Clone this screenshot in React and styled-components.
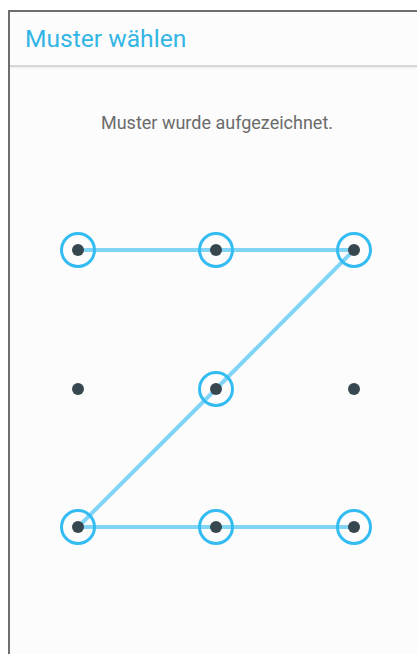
import React from 'react'
import styled, { createGlobalStyle } from 'styled-components'

const GlobalStyle = createGlobalStyle`
  html, body {
    margin: 0;
    padding: 0;
    background: #fff;
    overflow: hidden;
  }
  body {
    padding: 10px 0 0 8px;
    font-family: Roboto, "Noto Sans", sans-serif;
  }
`

const cols = [68, 206, 344]
const rows = [69, 208, 346]
const selected = [[0, 0], [1, 0], [2, 0], [1, 1], [0, 2], [1, 2], [2, 2]]
const path = [[0, 0], [1, 0], [2, 0], [1, 1], [0, 2], [1, 2], [2, 2]]

export default function App() {
  const isSel = (c, r) => selected.some(([a, b]) => a === c && b === r)
  const points = path.map(([c, r]) => `${cols[c]},${rows[r]}`).join(' ')
  return (
    <>
      <GlobalStyle />
      <Frame>
        <Header>
          <Title>Muster wählen</Title>
        </Header>
        <Message>Muster wurde aufgezeichnet.</Message>
        <Pattern>
          <svg width="414" height="420" viewBox="0 0 414 420">
            <polyline points={points} fill="none" stroke="#80d4f6" strokeWidth="4" strokeLinejoin="round" />
            {rows.map((y, r) =>
              cols.map((x, c) => (
                <g key={`${r}-${c}`}>
                  {isSel(c, r) && (
                    <circle cx={x} cy={y} r="16.5" fill="none" stroke="#33bcf2" strokeWidth="3" />
                  )}
                  <circle cx={x} cy={y} r="6" fill="#37474f" />
                </g>
              ))
            )}
          </svg>
        </Pattern>
      </Frame>
    </>
  )
}

const Frame = styled.div`
  width: 420px;
  height: 660px;
  background: #fcfcfc;
  border-top: 2px solid #6f6f6f;
  border-left: 2px solid #6f6f6f;
  box-sizing: border-box;
`

const Header = styled.div`
  height: 53px;
  display: flex;
  align-items: center;
  padding-left: 15px;
  background: #fcfcfc;
  border-bottom: 2px solid #d6d6d6;
  box-shadow: 0 1px 2px rgba(0, 0, 0, 0.08);
`

const Title = styled.div`
  font-size: 24.6px;
  color: #33b5e5;
`

const Message = styled.div`
  margin-top: 45px;
  width: 414px;
  text-align: center;
  font-size: 18px;
  line-height: 21px;
  color: #6b6b6b;
`

const Pattern = styled.div`
  margin-top: 48px;
  width: 414px;
  svg {
    display: block;
  }
`
